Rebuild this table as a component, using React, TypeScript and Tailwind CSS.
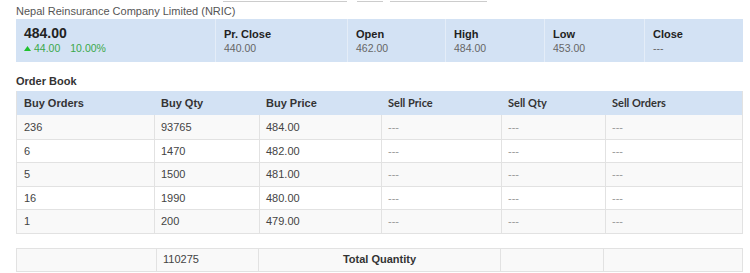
const buyRows = [
  { orders: '236', qty: '93765', price: '484.00' },
  { orders: '6', qty: '1470', price: '482.00' },
  { orders: '5', qty: '1500', price: '481.00' },
  { orders: '16', qty: '1990', price: '480.00' },
  { orders: '1', qty: '200', price: '479.00' },
];

const stats = [
  { label: 'Pr. Close', value: '440.00', w: 'w-[132px]' },
  { label: 'Open', value: '462.00', w: 'w-[98px]' },
  { label: 'High', value: '484.00', w: 'w-[99px]' },
  { label: 'Low', value: '453.00', w: 'w-[100px]' },
  { label: 'Close', value: '---', w: 'w-[98px]' },
];

const cols = 'grid grid-cols-[138px_105px_122px_120px_104px_138px]';

export default function App() {
  return (
    <div className="w-[750px] h-[273px] overflow-hidden bg-white font-['Liberation_Sans',Arial,sans-serif] text-[11px] text-[#333]">
      {/* cut-off form controls above */}
      <div className="flex h-[2px] items-start">
        <div className="ml-[223px] w-[124px] h-[2px] border-b border-[#ccc]" />
        <div className="ml-[10px] w-[26px] h-[2px] border-b border-[#ccc]" />
        <div className="ml-[7px] w-[97px] h-[2px] border-b border-[#ccc]" />
      </div>

      <div className="ml-4 w-[727px]">
        <div className="pt-[1px] h-[17px] text-[11px] text-[#555]">Nepal Reinsurance Company Limited (NRIC)</div>

        <div className="flex h-[43px] bg-[#d3e2f4]">
          <div className="w-[200px] pl-[8px] pt-[6px] border-r border-[#e4edf8]">
            <div className="text-[14px] font-bold leading-[16px] text-[#222]">484.00</div>
            <div className="flex items-center gap-[3px] text-[10.5px] leading-[14px] text-[#3aa84a]">
              <svg width="7" height="5" viewBox="0 0 7 5" className="mt-[1px]">
                <polygon points="3.5,0 7,5 0,5" fill="#1fc22e" />
              </svg>
              <span>44.00</span>
              <span className="ml-[7px]">10.00%</span>
            </div>
          </div>
          {stats.map((s, i) => (
            <div
              key={s.label}
              className={`${s.w} pl-[8px] pt-[9px] ${i < stats.length - 1 ? 'border-r border-[#e4edf8]' : ''}`}
            >
              <div className="font-bold leading-[13px] text-[#222]">{s.label}</div>
              <div className="text-[10.5px] leading-[14px] text-[#666]">{s.value}</div>
            </div>
          ))}
        </div>

        <div className="pt-[11px] h-[29px] font-bold text-[#333]">Order Book</div>

        <div className="border border-[#e2e2e2] border-t-0">
          <div className={`${cols} h-[24px] items-center bg-[#d3e2f4] font-bold text-[#333]`}>
            <div className="pl-[7px]">Buy Orders</div>
            <div className="pl-[6px]">Buy Qty</div>
            <div className="pl-[6px]">Buy Price</div>
            <div className="pl-[6px] font-['Lato',sans-serif]">Sell Price</div>
            <div className="pl-[6px] font-['Lato',sans-serif]">Sell Qty</div>
            <div className="pl-[6px] font-['Lato',sans-serif]">Sell Orders</div>
          </div>
          {buyRows.map((r, i) => (
            <div
              key={i}
              className={`${cols} h-[23.5px] items-stretch ${i % 2 === 0 ? 'bg-[#f9f9f9]' : 'bg-white'} ${i > 0 ? 'border-t border-[#e2e2e2]' : ''} text-[#444]`}
            >
              <div className="pl-[7px] flex items-center border-r border-[#e2e2e2]">{r.orders}</div>
              <div className="pl-[6px] flex items-center border-r border-[#e2e2e2]">{r.qty}</div>
              <div className="pl-[6px] flex items-center border-r border-[#e2e2e2]">{r.price}</div>
              <div className="pl-[6px] flex items-center border-r border-[#e2e2e2] text-[#999]">---</div>
              <div className="pl-[6px] flex items-center border-r border-[#e2e2e2] text-[#999]">---</div>
              <div className="pl-[6px] flex items-center text-[#999]">---</div>
            </div>
          ))}
        </div>

        <div className="mt-[14px] grid grid-cols-[140px_102px_242px_103px_140px] h-[24px] border border-[#e2e2e2] bg-[#f9f9f9] text-[#444]">
          <div className="border-r border-[#e2e2e2]" />
          <div className="pl-[6px] flex items-center border-r border-[#e2e2e2]">110275</div>
          <div className="flex items-center justify-center border-r border-[#e2e2e2] font-bold text-[#333]">Total Quantity</div>
          <div className="border-r border-[#e2e2e2]" />
          <div />
        </div>
      </div>
    </div>
  );
}
